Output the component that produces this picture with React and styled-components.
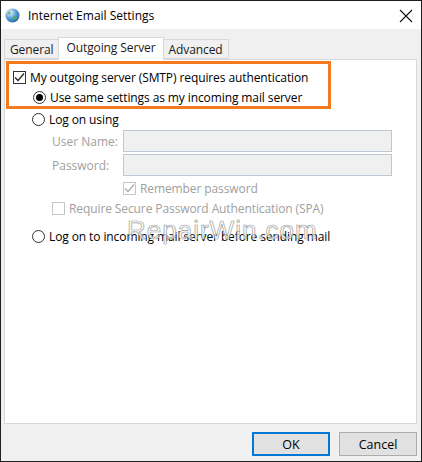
import React from "react";
import styled, { createGlobalStyle } from "styled-components";

const GlobalStyle = createGlobalStyle`
  html, body {
    margin: 0;
    padding: 0;
    background: #ffffff;
  }
  * {
    box-sizing: border-box;
  }
`;

const Window = styled.div`
  width: 422px;
  height: 462px;
  border: 1px solid #1f1f1f;
  display: flex;
  flex-direction: column;
  font-family: "Open Sans", "Noto Sans", sans-serif;
  font-size: 12px;
  color: #000;
  background: #f0f0f0;
`;

const TitleBar = styled.div`
  height: 28px;
  background: #fff;
  display: flex;
  align-items: center;
  padding: 0 8px 0 4px;
`;

const Title = styled.span`
  margin-left: 8px;
  font-size: 12px;
  flex: 1;
`;

const Close = styled.svg`
  width: 14px;
  height: 14px;
  margin-top: 1px;
`;

const Body = styled.div`
  flex: 1;
  display: flex;
  flex-direction: column;
  padding: 9px 4px 0 3px;
`;

const Tabs = styled.div`
  display: flex;
  align-items: flex-end;
  height: 21px;
  position: relative;
  z-index: 1;
`;

const Tab = styled.div`
  height: ${(p) => (p.$active ? "23px" : "20px")};
  margin-bottom: ${(p) => (p.$active ? "-1px" : "0")};
  padding: ${(p) => (p.$active ? "0 7px 3px" : "0 5px 0")};
  display: flex;
  align-items: center;
  background: ${(p) => (p.$active ? "#fff" : "#f0f0f0")};
  border: 1px solid #d9d9d9;
  border-bottom: ${(p) => (p.$active ? "none" : "1px solid #d9d9d9")};
  margin-left: ${(p) => (p.$first ? "0" : "-1px")};
  color: #1a1a1a;
  font-size: 12px;
  letter-spacing: -0.1px;
`;

const Panel = styled.div`
  height: 365px;
  background: #fff;
  border: 1px solid #d9d9d9;
  padding: 1px 0 0 1px;
  position: relative;
`;

const Highlight = styled.div`
  width: 325px;
  height: 48px;
  border: 3px solid #f47a20;
  padding-top: 3px;
`;

const Row = styled.div`
  display: flex;
  align-items: center;
  height: ${(p) => p.$h || 20}px;
  padding-left: ${(p) => p.$indent || 0}px;
  margin-top: ${(p) => p.$mt || 0}px;
  color: ${(p) => (p.$disabled ? "#a0a0a0" : "#000")};
`;

const Label = styled.span`
  margin-left: ${(p) => p.$gap || 4}px;
  letter-spacing: -0.1px;
`;

const Box = styled.span`
  width: 13px;
  height: 13px;
  border: 1px solid ${(p) => (p.$disabled ? "#c6c6c6" : "#333")};
  background: #fff;
  display: inline-flex;
  align-items: center;
  justify-content: center;
  flex: none;
`;

const Radio = styled.span`
  width: 13px;
  height: 13px;
  border-radius: 50%;
  border: 1px solid #333;
  background: #fff;
  display: inline-flex;
  align-items: center;
  justify-content: center;
  flex: none;
  &::after {
    content: "";
    width: 7px;
    height: 7px;
    border-radius: 50%;
    background: #000;
    display: ${(p) => (p.$checked ? "block" : "none")};
  }
`;

const FieldRow = styled.div`
  display: flex;
  align-items: center;
  padding-left: 46px;
  margin-top: ${(p) => p.$mt || 0}px;
`;

const FieldLabel = styled.span`
  width: 71px;
  color: #a0a0a0;
`;

const Input = styled.div`
  width: 269px;
  height: 22px;
  background: #f0f0f0;
  border: 1px solid #bcc7d8;
`;

const Watermark = styled.div`
  position: absolute;
  left: 122px;
  top: 157px;
  font-family: "Liberation Sans", Arial, sans-serif;
  font-size: 26px;
  line-height: 1;
  letter-spacing: 1px;
  color: rgba(255, 255, 255, 0.7);
  -webkit-text-stroke: 0.7px #9c9c9c;
  pointer-events: none;
`;

const Footer = styled.div`
  display: flex;
  justify-content: flex-end;
  gap: 9px;
  padding: 8px 0 0 0;
`;

const Button = styled.div`
  width: 78px;
  height: 24px;
  display: flex;
  align-items: center;
  justify-content: center;
  background: #e1e1e1;
  border: ${(p) => (p.$focused ? "2px solid #0078d7" : "1px solid #adadad")};
  font-size: 12.5px;
`;

const Check = ({ color = "#222" }) => (
  <svg width="11" height="11" viewBox="0 0 11 11">
    <path d="M1 5.5 L4 8.5 L10 1.5" fill="none" stroke={color} strokeWidth="1.2" />
  </svg>
);

const AppIcon = () => (
  <svg width="15" height="15" viewBox="0 0 15 15">
    <defs>
      <radialGradient id="g" cx="0.35" cy="0.3" r="0.8">
        <stop offset="0" stopColor="#e8f4ff" />
        <stop offset="0.5" stopColor="#5aa0d8" />
        <stop offset="1" stopColor="#1f5fa0" />
      </radialGradient>
    </defs>
    <circle cx="7.5" cy="7.5" r="7" fill="url(#g)" />
    <path d="M3 4 Q5 3 6 5 Q5 7 3.5 6.5 Z" fill="#4caf50" opacity="0.85" />
    <path d="M9 8 Q12 8 12 10.5 Q10 12.5 8.5 11 Z" fill="#4caf50" opacity="0.85" />
  </svg>
);

export default function App() {
  return (
    <>
      <GlobalStyle />
      <Window>
        <TitleBar>
          <AppIcon />
          <Title>Internet Email Settings</Title>
          <Close viewBox="0 0 14 14">
            <path d="M1 1 L13 13 M13 1 L1 13" stroke="#111" strokeWidth="1.1" />
          </Close>
        </TitleBar>
        <Body>
          <Tabs>
            <Tab $first>General</Tab>
            <Tab $active>Outgoing Server</Tab>
            <Tab>Advanced</Tab>
          </Tabs>
          <Panel>
            <Highlight>
              <Row $indent={4}>
                <Box>
                  <Check />
                </Box>
                <Label>My outgoing server (SMTP) requires authentication</Label>
              </Row>
              <Row $indent={24}>
                <Radio $checked />
                <Label>Use same settings as my incoming mail server</Label>
              </Row>
            </Highlight>
            <Row $indent={26}>
              <Radio />
              <Label>Log on using</Label>
            </Row>
            <FieldRow $mt={1}>
              <FieldLabel>User Name:</FieldLabel>
              <Input />
            </FieldRow>
            <FieldRow $mt={2}>
              <FieldLabel>Password:</FieldLabel>
              <Input />
            </FieldRow>
            <Row $indent={117} $h={18} $mt={3} $disabled>
              <Box $disabled>
                <Check color="#a8a8a8" />
              </Box>
              <Label>Remember password</Label>
            </Row>
            <Row $indent={46} $h={18} $mt={2} $disabled>
              <Box $disabled />
              <Label>Require Secure Password Authentication (SPA)</Label>
            </Row>
            <Row $indent={26} $mt={9}>
              <Radio />
              <Label>Log on to incoming mail server before sending mail</Label>
            </Row>
            <Watermark>RepairWin.com</Watermark>
          </Panel>
          <Footer>
            <Button $focused>OK</Button>
            <Button>Cancel</Button>
          </Footer>
        </Body>
      </Window>
    </>
  );
}
